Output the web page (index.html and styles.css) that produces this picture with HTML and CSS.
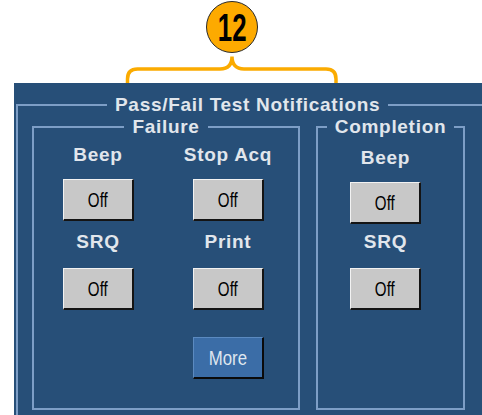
FILE: index.html
```html
<!DOCTYPE html>
<html lang="en">

<head>
    <meta charset="UTF-8">
    <meta name="viewport" content="width=device-width, initial-scale=1.0">
    <title>Pass/Fail Test Notifications</title>
    <link rel="stylesheet" href="styles.css">
</head>

<body>

    <div class="callout">
        <div class="badge"><span>12</span></div>
        <svg class="brace" width="214" height="28" viewBox="0 0 214 28">
            <path d="M2.5,28 V24 Q2.5,14 12.5,14 H95 Q107,14 107,1.5 Q107,14 119,14 H201 Q211,14 211,24 V28" />
        </svg>
    </div>

    <div class="panel">
        <fieldset class="outer">
            <legend>Pass/Fail Test Notifications</legend>
            <div class="groups">
                <fieldset class="group failure">
                    <legend>Failure</legend>
                    <div class="cols">
                        <div class="col">
                            <span class="label">Beep</span>
                            <button class="btn"><span>Off</span></button>
                            <span class="label second">SRQ</span>
                            <button class="btn"><span>Off</span></button>
                        </div>
                        <div class="col">
                            <span class="label">Stop Acq</span>
                            <button class="btn"><span>Off</span></button>
                            <span class="label second">Print</span>
                            <button class="btn"><span>Off</span></button>
                            <button class="btn more"><span>More</span></button>
                        </div>
                    </div>
                </fieldset>
                <fieldset class="group completion">
                    <legend>Completion</legend>
                    <div class="cols">
                        <div class="col">
                            <span class="label">Beep</span>
                            <button class="btn"><span>Off</span></button>
                            <span class="label second">SRQ</span>
                            <button class="btn"><span>Off</span></button>
                        </div>
                    </div>
                </fieldset>
            </div>
        </fieldset>
    </div>

</body>

</html>
```

FILE: styles.css
```css
body {
    margin: 0;
    width: 482px;
    height: 415px;
    overflow: hidden;
    background-color: #ffffff;
    font-family: "Liberation Sans", Arial, sans-serif;
}

.callout {
    display: flex;
    flex-direction: column;
    align-items: center;
    width: 464px;
    height: 83px;
}

.badge {
    display: flex;
    align-items: center;
    justify-content: center;
    width: 50px;
    height: 50px;
    margin-top: 1px;
    border: 1px solid #2a2a2a;
    border-radius: 50%;
    background-color: #fdaa00;
}

.badge span {
    display: inline-block;
    font-size: 38px;
    font-weight: bold;
    color: #000000;
    line-height: 1;
    transform: scaleX(0.68);
    margin-top: 2px;
}

.brace {
    margin-top: 2px;
}

.brace path {
    fill: none;
    stroke: #fbab00;
    stroke-width: 3.5;
}

.panel {
    margin-left: 14px;
    height: 332px;
    padding: 12px 0 0 2px;
    box-sizing: border-box;
    overflow: hidden;
    background-color: #274f78;
}

fieldset {
    margin: 0;
    border: 2px solid #7d9ec6;
    box-sizing: border-box;
}

legend {
    font-size: 19px;
    font-weight: bold;
    letter-spacing: 0.7px;
    line-height: 20px;
    color: #e1e6ec;
    padding: 0 8px;
}

.outer {
    width: 520px;
    height: 400px;
    padding: 2px 0 0 14px;
}

.outer > legend {
    margin-left: 75px;
}

.groups {
    display: flex;
    gap: 16px;
}

.group {
    height: 293px;
    padding: 0;
}

.group > legend {
    margin: 0 auto;
}

.failure {
    width: 268px;
}

.completion {
    width: 149px;
}

.cols {
    display: flex;
    padding-top: 8px;
}

.col {
    display: flex;
    flex-direction: column;
    align-items: center;
}

.failure .col:first-child {
    width: 128px;
}

.failure .col:last-child {
    width: 132px;
}

.completion .cols {
    padding-top: 11px;
    padding-left: 32px;
}

.completion .col {
    width: 71px;
}

.completion .second {
    margin-top: 8px;
}

.label {
    font-size: 19px;
    font-weight: bold;
    letter-spacing: 0.7px;
    line-height: 20px;
    color: #e1e6ec;
    white-space: nowrap;
}

.second {
    margin-top: 11px;
}

.btn {
    display: flex;
    align-items: center;
    justify-content: center;
    width: 71px;
    height: 42px;
    margin-top: 14px;
    padding: 0;
    box-sizing: border-box;
    border-style: solid;
    border-width: 1px 2px 2px 1px;
    border-color: #f2f2f2 #141414 #141414 #f2f2f2;
    background-color: #c8c8c8;
    font-family: "Liberation Sans", Arial, sans-serif;
    font-size: 21px;
    color: #000000;
}

.second + .btn {
    margin-top: 16px;
}

.btn span {
    display: inline-block;
    transform: scaleX(0.72);
}

.more {
    margin-top: 27px;
    border-color: #5b8ac0 #0a0a0a #0a0a0a #5b8ac0;
    background-color: #3b6da7;
    color: #dfe6ef;
}

.more span {
    transform: scaleX(0.8);
}
```
